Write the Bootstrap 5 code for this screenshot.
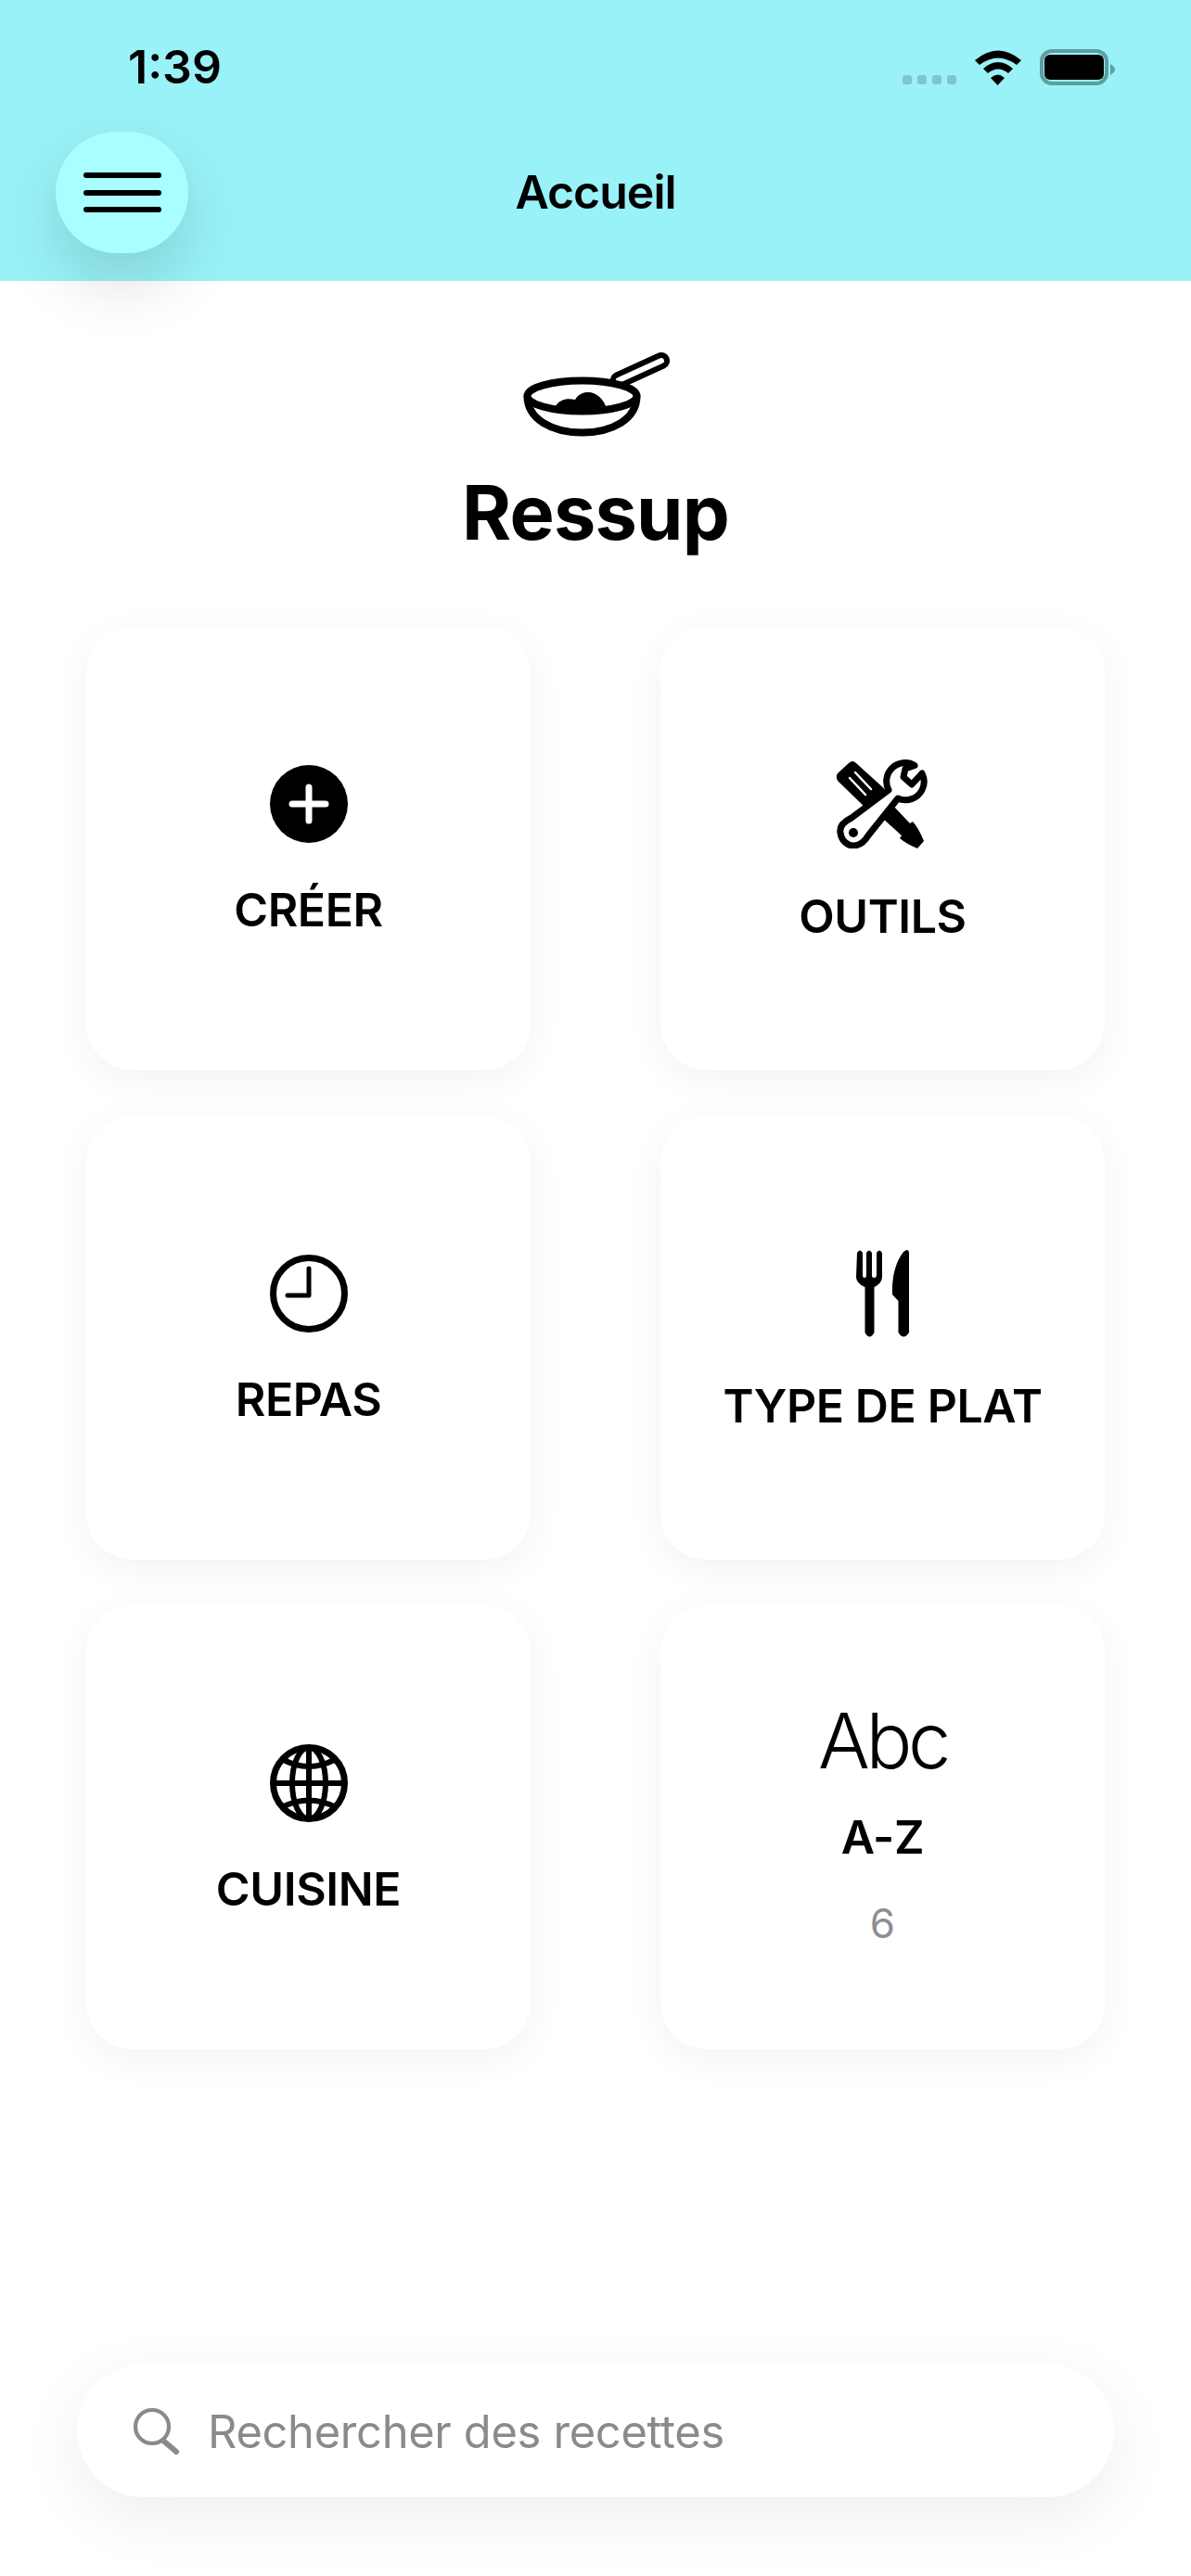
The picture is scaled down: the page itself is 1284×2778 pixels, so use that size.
<!DOCTYPE html>
<html lang="fr">
<head>
  <meta charset="UTF-8" />
  <meta name="viewport" content="width=device-width, initial-scale=1.0" />
  <title>Ressup - Accueil</title>
  <link href="https://cdn.jsdelivr.net/npm/bootstrap@5.3.3/dist/css/bootstrap.min.css" rel="stylesheet" />
  <style>
    body {
      background-color: #fff;
      color: #000;
      font-family: Inter, "Liberation Sans", sans-serif;
    }

    .app-screen {
      width: 1284px;
      height: 2778px;
      overflow: hidden;
    }

    /* En-tete */
    .app-header {
      background-color: #99f2f7;
      height: 303px;
      padding-left: 60px;
    }

    .status-row {
      height: 142px;
      padding: 44px 82px 0 78px;
    }

    .status-time {
      font-size: 50px;
      font-weight: 600;
      line-height: 56px;
    }

    .title-row {
      display: grid;
      grid-template-columns: 143px 1fr 143px;
      padding-right: 60px;
    }

    .menu-btn {
      width: 143px;
      height: 131px;
      border: 0;
      border-radius: 66px;
      background-color: #a9ffff;
      box-shadow: 0 30px 70px rgba(0, 0, 0, .14);
      gap: 12.5px;
    }

    .menu-btn span {
      display: block;
      width: 84px;
      height: 6px;
      border-radius: 3px;
      background-color: #000;
    }

    .page-title {
      font-size: 50px;
      font-weight: 600;
      line-height: 131px;
      letter-spacing: -1px;
      margin-bottom: 0;
    }

    /* Marque */
    .brand-block {
      padding-top: 77px;
    }

    .brand-name {
      font-size: 81px;
      font-weight: 700;
      line-height: 96px;
      letter-spacing: -.8px;
      margin-top: 33px;
    }

    /* Grille */
    .tile-grid {
      display: grid;
      grid-template-columns: 479px 479px;
      grid-auto-rows: 479px;
      column-gap: 140px;
      row-gap: 49px;
      padding: 74px 0 0 93px;
    }

    .tile {
      border: 0;
      border-radius: 50px;
      color: #000;
      box-shadow: 0 10px 40px rgba(0, 0, 0, .05);
      padding-top: 144px;
    }

    .tile-icon {
      height: 96px;
    }

    .tile-label {
      font-size: 50px;
      font-weight: 600;
      line-height: 58px;
      letter-spacing: -.4px;
      margin-top: 37px;
    }

    .tile-label-low {
      margin-top: 44px;
    }

    .tile-abc {
      padding-top: 99px;
    }

    .abc-glyph {
      font-size: 83px;
      font-weight: 350;
      line-height: 94px;
      letter-spacing: -4.5px;
    }

    .abc-label {
      margin-top: 28px;
    }

    .abc-count {
      font-size: 44px;
      line-height: 54px;
      color: #8e8e93;
      margin-top: 37px;
    }

    /* Recherche */
    .search-pill {
      margin: 340px 0 0 83px;
      width: 1118px;
      height: 143px;
      border-radius: 72px;
      background-color: #fff;
      box-shadow: 0 20px 70px rgba(0, 0, 0, .07);
      padding-left: 61px;
      gap: 30px;
    }

    .search-text {
      font-size: 48.8px;
      color: #8a8a8e;
      letter-spacing: -.3px;
      padding-top: 2px;
    }
  </style>
</head>
<body>
  <div class="app-screen d-flex flex-column">

    <header class="app-header flex-shrink-0">
      <div class="status-row d-flex justify-content-between align-items-start">
        <div class="status-time">1:39</div>
        <svg class="mt-1" width="230" height="48" viewBox="0 0 230 48" aria-hidden="true">
          <g fill="#7fc6c9">
            <rect x="1" y="33" width="10" height="10" rx="3" />
            <rect x="17" y="33" width="10" height="10" rx="3" />
            <rect x="33" y="33" width="10" height="10" rx="3" />
            <rect x="49" y="33" width="10" height="10" rx="3" />
          </g>
          <g fill="#000">
            <path d="M79 17 Q104 -4 129 17 L124 22 Q104 7 84 22 Z" />
            <path d="M88 26 Q104 12 120 26 L115 31 Q104 22 93 31 Z" />
            <path d="M96 36 Q104 29 111 36 L103.5 44 Z" />
          </g>
          <rect x="151" y="7" width="70" height="35" rx="11" fill="none" stroke="#5f9ea1" stroke-width="4" />
          <rect x="154" y="11" width="64" height="27" rx="6" fill="#000" />
          <path d="M225 21 C228 23 230 25 230 27 C230 29 228 31 225 33 Z" fill="#5f9ea1" />
        </svg>
      </div>
      <div class="title-row">
        <button type="button" class="menu-btn d-flex flex-column align-items-center justify-content-center" aria-label="Menu">
          <span></span><span></span><span></span>
        </button>
        <h1 class="page-title text-center">Accueil</h1>
      </div>
    </header>

    <main class="flex-grow-1">
      <div class="brand-block d-flex flex-column align-items-center">
        <svg width="160" height="92" viewBox="-3 0 160 92" aria-hidden="true">
          <path d="M102 30 L148 9" fill="none" stroke="#000" stroke-width="18" stroke-linecap="round" />
          <path d="M102 30 L148 9" fill="none" stroke="#fff" stroke-width="6" stroke-linecap="round" />
          <path d="M3.5 47 C3.5 72 30 86.5 62.5 86.5 C95 86.5 121.5 72 121.5 47" fill="#fff" stroke="#000" stroke-width="8" />
          <ellipse cx="62.5" cy="47" rx="59" ry="16.5" fill="#fff" stroke="#000" stroke-width="8" />
          <path d="M34 58 C38 51 46 49 55 51 C59 44 65 43 69 43 C78 43 85 50 88 58 C70 62 50 62 34 58 Z" fill="#000" />
        </svg>
        <div class="brand-name">Ressup</div>
      </div>

      <div class="tile-grid">
        <a href="#" class="tile card text-decoration-none align-items-center">
          <svg class="tile-icon" width="96" height="96" viewBox="0 0 96 96" aria-hidden="true">
            <circle cx="48" cy="48" r="42" fill="#000" />
            <path d="M48 30 V66 M30 48 H66" stroke="#fff" stroke-width="7" stroke-linecap="round" />
          </svg>
          <div class="tile-label">CRÉER</div>
        </a>
        <a href="#" class="tile card text-decoration-none align-items-center">
          <svg class="tile-icon" width="100" height="96" viewBox="0 0 100 96" aria-hidden="true">
            <path d="M1 15 L13 4 Q17 0 21 4 L53 33 L30 51 L2 24 Q-2 19 1 15 Z" fill="#000" />
            <path d="M14 20 L31 38 M20 14 L37 32" stroke="#fff" stroke-width="2.5" stroke-linecap="round" />
            <path d="M62 51 L79 69 L82 67 Q89 75 94 88 L87 96 Q75 91 68 85 L70 82 L49 63 Z" fill="#000" />
            <path d="M84 6.5 A20 20 0 0 0 56 33 L16 63 C6 68 3 74 4 79 C5 88 12 93 18 93 C26 93 31 87 34 82 L66 42 A20 20 0 0 0 92 33 A20 20 0 0 0 92 15 L81 27 L72 19 L74 10 Z" fill="#fff" stroke="#000" stroke-width="7" stroke-linejoin="round" />
            <circle cx="18" cy="79" r="5" fill="#000" />
          </svg>
          <div class="tile-label tile-label-low">OUTILS</div>
        </a>
        <a href="#" class="tile card text-decoration-none align-items-center">
          <svg class="tile-icon" width="96" height="96" viewBox="0 0 96 96" aria-hidden="true">
            <circle cx="48" cy="48" r="38.5" fill="none" stroke="#000" stroke-width="7" />
            <path d="M48 21 V50 H25" fill="none" stroke="#000" stroke-width="5" stroke-linecap="round" stroke-linejoin="round" />
          </svg>
          <div class="tile-label">REPAS</div>
        </a>
        <a href="#" class="tile card text-decoration-none align-items-center">
          <svg class="tile-icon" width="58" height="96" viewBox="0 0 58 96" aria-hidden="true">
            <path d="M1 4 Q4 -1 7 4 L7 28 Q7 31 9 31 Q11 31 11 28 L11 4 Q14 -1 17 4 L17 28 Q17 31 19 31 Q22 31 22 28 L22 4 Q25 -1 28 4 L28 30 Q28 37 19.5 41 L19.5 90 Q14.5 99 9.5 90 L9.5 41 Q0 37 0 30 Z" fill="#000" />
            <path d="M51 3 Q57 -2 57 5 L57 90 Q51 99 45.5 90 L45.5 56 L39 49 Q38 20 51 3 Z" fill="#000" />
          </svg>
          <div class="tile-label tile-label-low">TYPE DE PLAT</div>
        </a>
        <a href="#" class="tile card text-decoration-none align-items-center">
          <svg class="tile-icon" width="96" height="96" viewBox="0 0 96 96" fill="none" stroke="#000" stroke-width="6" aria-hidden="true">
            <circle cx="48" cy="48" r="38.5" stroke-width="7" />
            <ellipse cx="48" cy="48" rx="18" ry="38.5" />
            <path d="M48 9 V87 M9 48 H87" />
            <path d="M19 22 Q48 38 77 22 M19 74 Q48 59 77 74" />
          </svg>
          <div class="tile-label">CUISINE</div>
        </a>
        <a href="#" class="tile tile-abc card text-decoration-none align-items-center">
          <div class="abc-glyph">Abc</div>
          <div class="tile-label abc-label">A-Z</div>
          <div class="abc-count">6</div>
        </a>
      </div>

      <div class="search-pill d-flex align-items-center">
        <svg width="50" height="50" viewBox="0 0 50 50" fill="none" stroke="#8a8a8e" aria-hidden="true">
          <circle cx="20" cy="20" r="18" stroke-width="4.2" />
          <path d="M32 35 L46 47" stroke-width="6" stroke-linecap="round" />
        </svg>
        <div class="search-text">Rechercher des recettes</div>
      </div>
    </main>
  </div>

  <script src="https://cdn.jsdelivr.net/npm/bootstrap@5.3.3/dist/js/bootstrap.bundle.min.js"></script>
</body>
</html>
